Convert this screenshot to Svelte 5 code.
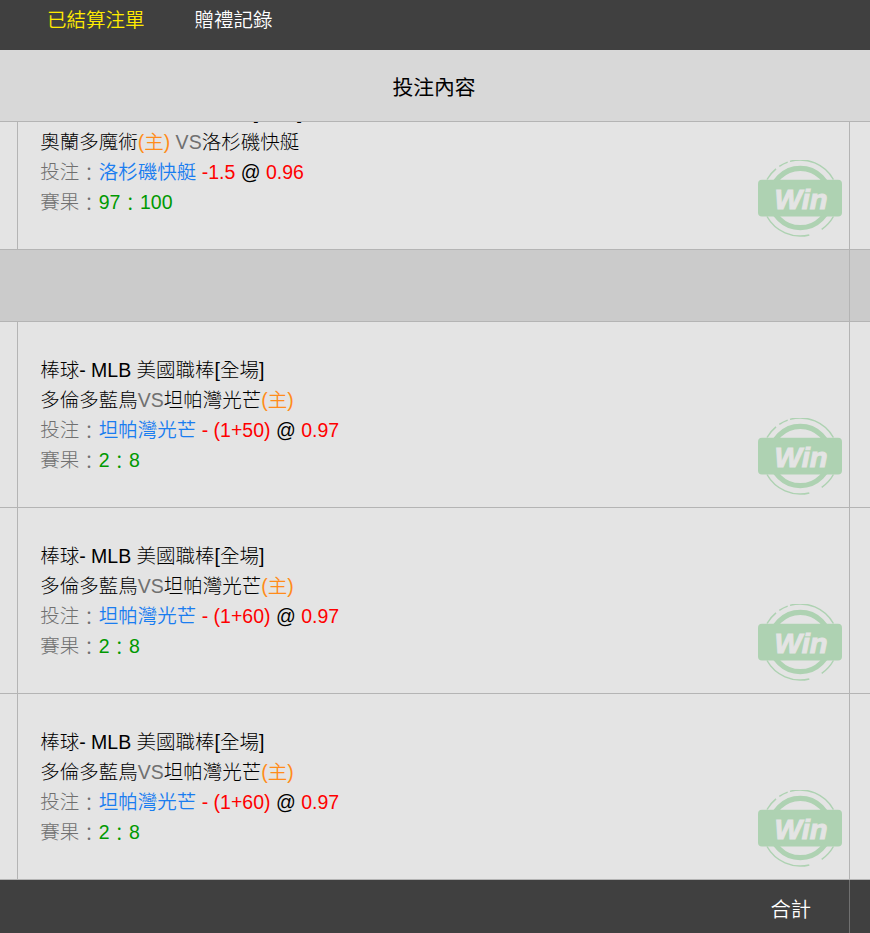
<script lang="ts">
	type Bet = {
		id: number
		league: string
		first: string
		first_home: boolean
		second: string
		second_home: boolean
		separator: string
		pick: string
		handicap: string
		odds: string
		score: [number, number]
	}

	const TABS = [
		{ label: '已結算注單', active: true },
		{ label: '贈禮記錄', active: false },
	]

	const BASKETBALL: readonly Bet[] = [
		{
			id: 1,
			league: '籃球- NBA 美國職業籃球[全場]',
			first: '奧蘭多魔術',
			first_home: true,
			second: '洛杉磯快艇',
			second_home: false,
			separator: ' VS',
			pick: '洛杉磯快艇',
			handicap: '-1.5',
			odds: '0.96',
			score: [97, 100],
		},
	]

	const BASEBALL: readonly Bet[] = [50, 60, 60].map((line, i) => ({
		id: i + 2,
		league: '棒球- MLB 美國職棒[全場]',
		first: '多倫多藍鳥',
		first_home: false,
		second: '坦帕灣光芒',
		second_home: true,
		separator: 'VS',
		pick: '坦帕灣光芒',
		handicap: `- (1+${line})`,
		odds: '0.97',
		score: [2, 8],
	}))
</script>

{#snippet colon()}<span class="colon">：</span>{/snippet}

{#snippet stamp()}
	<svg class="stamp" viewBox="0 0 84 77" role="img" aria-label="Win">
		<g class="arcs">
			<path d="M32 1.4A38 38 0 0 1 75.4 19.5" />
			<path d="M21.3 6.3A38 38 0 0 1 29.7 2.1" />
			<path d="M9 19.5A38 38 0 0 1 18 8.8" />
			<path d="M9 56.5A38 38 0 0 0 51.3 74.9" />
			<path d="M63.7 69.4A38 38 0 0 0 75.4 56.5" />
		</g>
		<circle class="ring" cx="42.3" cy="38" r="29.7" />
		<rect class="plate" y="19.7" width="84" height="36.8" rx="4" />
		<text x="16.5" y="49" textLength="53" lengthAdjust="spacingAndGlyphs">Win</text>
	</svg>
{/snippet}

{#snippet bet_row(bet: Bet)}
	<div class="row">
		<div class="cell side"></div>
		<div class="cell main">
			<div class="bet">
				<p>{bet.league}</p>
				<p>
					{bet.first}{#if bet.first_home}<span class="home">(主)</span>{/if}<span class="label">{bet.separator}</span>{bet.second}{#if bet.second_home}<span class="home">(主)</span>{/if}
				</p>
				<p>
					<span class="label">投注{@render colon()}</span><span class="pick">{bet.pick}</span>
					<span class="red">{bet.handicap}</span> @ <span class="red">{bet.odds}</span>
				</p>
				<p>
					<span class="label">賽果{@render colon()}</span><span class="result">{bet.score[0]}{@render colon()}{bet.score[1]}</span>
				</p>
			</div>
			{@render stamp()}
		</div>
		<div class="cell"></div>
	</div>
{/snippet}

<div class="page">
	<nav class="tabs">
		{#each TABS as tab (tab.label)}
			<span class:active={tab.active}>{tab.label}</span>
		{/each}
	</nav>
	<header class="head">投注內容</header>
	<div class="list">
		{#each BASKETBALL as bet (bet.id)}
			{@render bet_row(bet)}
		{/each}
		<div class="row subtotal">
			<div class="cell wide"></div>
			<div class="cell"></div>
		</div>
		{#each BASEBALL as bet (bet.id)}
			{@render bet_row(bet)}
		{/each}
	</div>
	<footer class="row total">
		<div class="cell wide">合計</div>
		<div class="cell"></div>
	</footer>
</div>

<style>
	.page {
		display: flex;
		flex-direction: column;
		height: 933px;
		overflow: hidden;
		background: #e4e4e4;
		color: #000;
		font-family: 'Liberation Sans', 'Noto Sans CJK TC', sans-serif;
		font-size: 19.5px;
		font-weight: 300;
		line-height: 30px;
	}

	.tabs {
		display: flex;
		flex: none;
		gap: 50px;
		box-sizing: border-box;
		height: 50px;
		padding: 5px 47px 0;
		background: #404040;
		color: #fff;
		font-weight: 350;
	}
	.tabs .active {
		color: #ffeb00;
	}

	.head {
		display: flex;
		flex: none;
		align-items: center;
		justify-content: center;
		box-sizing: border-box;
		height: 72px;
		padding-top: 5px;
		border-bottom: 1px solid #b4b4b4;
		background: #d8d8d8;
		font-size: 20.8px;
		font-weight: 400;
		text-indent: -2px;
	}

	/* scrolled to the end, so the oldest row is cut at the top */
	.list {
		display: flex;
		flex: none;
		flex-direction: column;
		justify-content: flex-end;
		height: 758px;
		overflow: hidden;
	}

	.row {
		display: grid;
		flex: none;
		grid-template-columns: 18px 832px 20px;
		box-sizing: border-box;
		height: 186px;
		border-bottom: 1px solid #b4b4b4;
	}
	.cell {
		box-sizing: border-box;
		border-right: 1px solid #b4b4b4;
	}
	.cell:last-child {
		border-right: 0;
	}
	.main {
		display: flex;
		justify-content: space-between;
		padding: 33px 7px 0 22.2px;
	}
	.wide {
		grid-column: span 2;
	}

	.bet p {
		margin: 0;
		height: 30px;
		white-space: nowrap;
	}
	.label {
		color: #707070;
		white-space: pre;
	}
	.colon {
		line-height: 1;
		vertical-align: -2px;
	}
	.home {
		color: #ff8c1a;
		font-weight: 350;
	}
	.pick {
		color: #1a7df0;
		font-weight: 350;
	}
	.red {
		color: #f00;
	}
	.result {
		color: #090;
	}

	.stamp {
		flex: none;
		width: 84px;
		height: 77px;
		margin-top: 63px;
	}
	.arcs,
	.ring {
		fill: none;
		stroke: #aed2b2;
	}
	.arcs {
		stroke-width: 1.5;
	}
	.ring {
		stroke-width: 5.2;
	}
	.plate {
		fill: #aed2b2;
	}
	.stamp text {
		fill: #e4e4e4;
		stroke: #e4e4e4;
		stroke-width: 1;
		font-size: 27px;
		font-style: italic;
		font-weight: 700;
	}

	.subtotal {
		height: 72px;
		background: #cbcbcb;
	}

	.total {
		height: 53px;
		border-bottom: 0;
		background: #404040;
		color: #fff;
		font-size: 20.3px;
		font-weight: 350;
	}
	.total .wide {
		padding: 15px 38px 0 0;
		text-align: right;
	}
	.total .cell {
		border-color: #707070;
	}
</style>
